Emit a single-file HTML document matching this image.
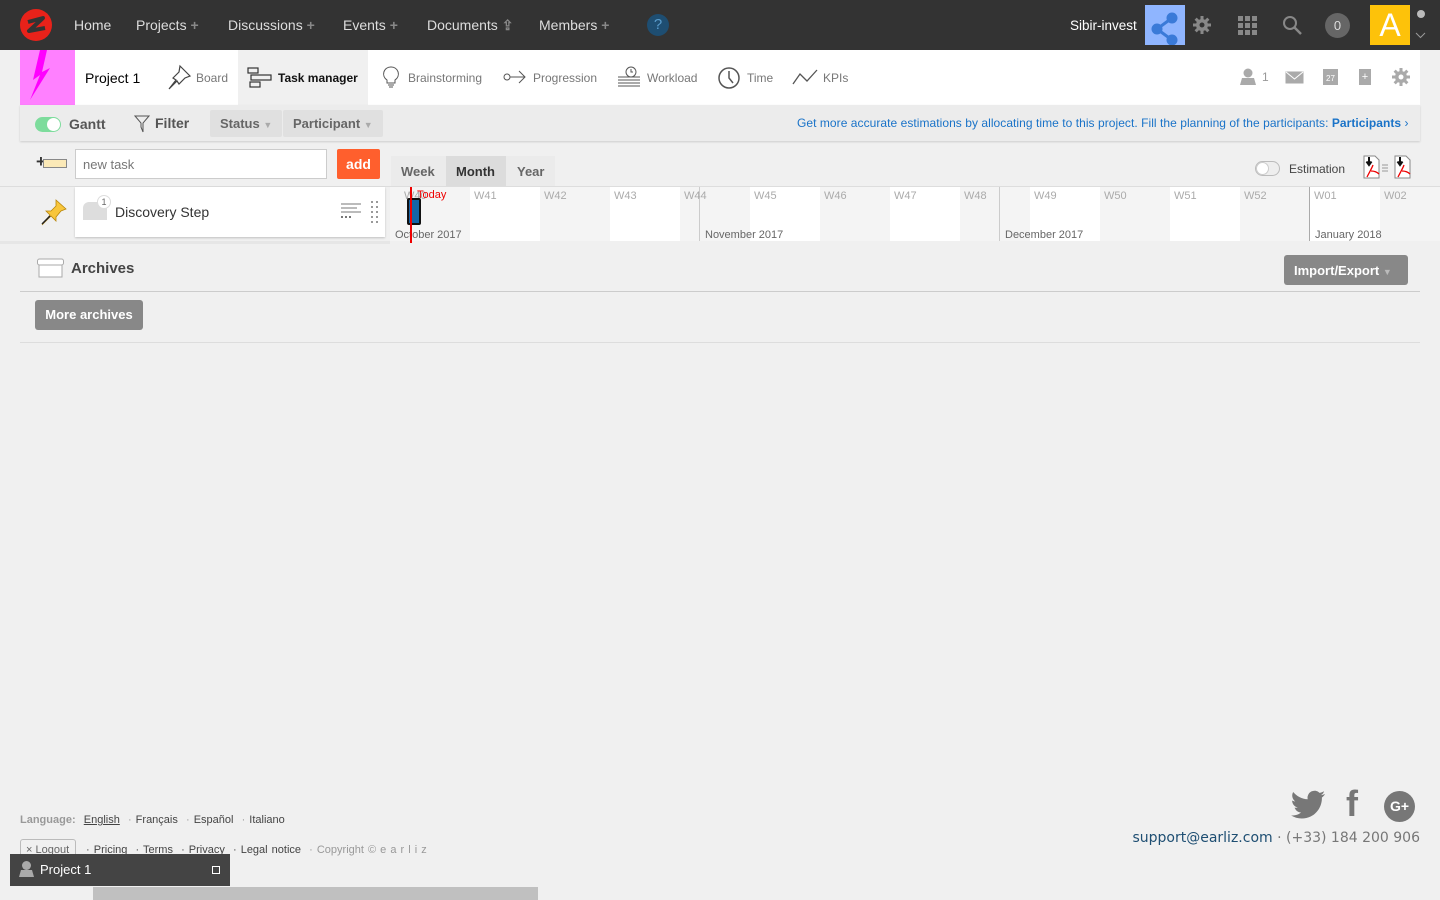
<!DOCTYPE html>
<html><head><meta charset="utf-8"><style>
*{box-sizing:border-box;margin:0;padding:0}
body{width:1440px;height:900px;background:#f0f0f0;font-family:"Liberation Sans",sans-serif;position:relative;overflow:hidden;color:#333}
.a{position:absolute}
.top{left:0;top:0;width:1440px;height:50px;background:#333}
.nav{color:#ddd;font-size:14px;top:17px;line-height:17px}
.plus{color:#888;font-size:14px;font-weight:bold}
.pn{left:20px;top:50px;width:1400px;height:55px;background:#fff}
.tab{top:71px;font-size:12px;color:#777}
.fb{left:20px;top:105px;width:1400px;height:36px;background:#ececec;box-shadow:0 1px 2px rgba(0,0,0,.15)}
.dd{top:110px;height:27px;background:#e0e0e0;color:#666;font-weight:bold;font-size:13px;padding:6px 10px;border-radius:2px}
.wk{font-size:11px;color:#aaa;top:190px}
.mo{font-size:11px;color:#666;top:229px}
</style></head><body>
<div class="a top"></div>
<svg class="a" style="left:19px;top:8px" width="34" height="34" viewBox="0 0 34 34"><circle cx="17" cy="17" r="16" fill="#e8221a"/><path d="M9 14 L24 10 L10 23 L26 20" stroke="#333" stroke-width="4" fill="none" stroke-linejoin="round"/></svg>
<div class="a nav" style="left:74px">Home</div>
<div class="a nav" style="left:136px">Projects <span class="plus">+</span></div>
<div class="a nav" style="left:228px">Discussions <span class="plus">+</span></div>
<div class="a nav" style="left:343px">Events <span class="plus">+</span></div>
<div class="a nav" style="left:427px">Documents <span class="plus">⇪</span></div>
<div class="a nav" style="left:539px">Members <span class="plus">+</span></div>
<div class="a" style="left:647px;top:14px;width:22px;height:22px;border-radius:50%;background:#1e4e72;color:#5a9ccc;font-size:15px;text-align:center;line-height:22px">?</div>
<div class="a" style="left:1070px;top:18px;color:#fff;font-size:13.5px">Sibir-invest</div>
<div class="a" style="left:1145px;top:5px;width:40px;height:40px;background:#8fb5ff"><svg width="40" height="40"><g fill="#3a7ad8" stroke="#3a7ad8" stroke-width="3"><circle cx="27" cy="13" r="4"/><circle cx="12" cy="24" r="4"/><circle cx="27" cy="35" r="4"/><path d="M27 13L12 24L27 35" fill="none"/></g></svg></div>
<svg class="a" style="left:1193px;top:16px" width="18" height="18" viewBox="0 0 18 18"><g fill="#888"><circle cx="9" cy="9" r="6"/><rect x="7.5" y="0" width="3" height="18"/><rect x="0" y="7.5" width="18" height="3"/><rect x="7.5" y="0" width="3" height="18" transform="rotate(45 9 9)"/><rect x="7.5" y="0" width="3" height="18" transform="rotate(-45 9 9)"/></g><circle cx="9" cy="9" r="2.5" fill="#333"/></svg>
<svg class="a" style="left:1238px;top:16px" width="19" height="19"><g fill="#888"><rect x="0" y="0" width="5" height="5"/><rect x="7" y="0" width="5" height="5"/><rect x="14" y="0" width="5" height="5"/><rect x="0" y="7" width="5" height="5"/><rect x="7" y="7" width="5" height="5"/><rect x="14" y="7" width="5" height="5"/><rect x="0" y="14" width="5" height="5"/><rect x="7" y="14" width="5" height="5"/><rect x="14" y="14" width="5" height="5"/></g></svg>
<svg class="a" style="left:1282px;top:15px" width="22" height="22"><circle cx="8" cy="8" r="6" stroke="#888" stroke-width="2" fill="none"/><path d="M12 12L19 19" stroke="#888" stroke-width="2.5"/></svg>
<div class="a" style="left:1325px;top:13px;width:25px;height:25px;border-radius:50%;background:#666;color:#ddd;font-size:13px;text-align:center;line-height:25px">0</div>
<div class="a" style="left:1370px;top:5px;width:40px;height:40px;background:#fdc20a;color:#fff;font-size:32px;text-align:center;line-height:40px">A</div>
<div class="a" style="left:1417px;top:10px;width:8px;height:8px;border-radius:50%;background:#bbb"></div>
<svg class="a" style="left:1415px;top:32px" width="11" height="7"><path d="M1 1l4.5 4.5L10 1" stroke="#999" fill="none"/></svg>

<div class="a pn"></div>
<div class="a" style="left:20px;top:50px;width:55px;height:55px;background:#ff80ff"><svg width="55" height="55"><path d="M20 0 L13 30 L20 25 L10 50 L30 18 L22 22 L27 0Z" fill="#ff00ff"/></svg></div>
<div class="a" style="left:85px;top:70px;font-size:14px;color:#000">Project 1</div>
<svg class="a" style="left:166px;top:64px" width="26" height="26"><path d="M14 2l10 10-5 2-6 6-2-3-8 8 7-9-3-2 6-6z" fill="none" stroke="#444" stroke-width="1.2"/></svg>
<div class="a tab" style="left:196px">Board</div>
<div class="a" style="left:238px;top:50px;width:130px;height:55px;background:#f0f0f0"></div>
<svg class="a" style="left:247px;top:67px" width="26" height="22"><g fill="none" stroke="#333" stroke-width="1.2"><rect x="1" y="1" width="10" height="5"/><rect x="4" y="8" width="20" height="5"/><rect x="3" y="15" width="10" height="5"/></g></svg>
<div class="a tab" style="left:278px;color:#111;font-weight:bold">Task manager</div>
<svg class="a" style="left:381px;top:65px" width="20" height="25"><path d="M10 2a7 7 0 0 0-4 13v3h8v-3a7 7 0 0 0-4-13z" fill="none" stroke="#555"/><path d="M7 20h6M8 22h4" stroke="#555"/></svg>
<div class="a tab" style="left:408px">Brainstorming</div>
<svg class="a" style="left:503px;top:69px" width="24" height="16"><circle cx="4" cy="8" r="3" fill="none" stroke="#555"/><path d="M7 8h15M16 2l6 6-6 6" fill="none" stroke="#555"/></svg>
<div class="a tab" style="left:533px">Progression</div>
<svg class="a" style="left:617px;top:65px" width="24" height="24"><g stroke="#555" fill="none"><circle cx="14" cy="7" r="5"/><path d="M14 4v3h2M1 12h22M1 15h22M1 18h22M1 21h22"/></g></svg>
<div class="a tab" style="left:647px">Workload</div>
<svg class="a" style="left:717px;top:66px" width="24" height="24"><circle cx="12" cy="12" r="10" fill="none" stroke="#555" stroke-width="1.5"/><path d="M12 5v7l4 5" stroke="#555" fill="none" stroke-width="1.5"/></svg>
<div class="a tab" style="left:747px">Time</div>
<svg class="a" style="left:791px;top:68px" width="28" height="18"><path d="M2 16L9 6L16 13L26 2" fill="none" stroke="#555" stroke-width="1.3"/></svg>
<div class="a tab" style="left:823px">KPIs</div>
<svg class="a" style="left:1240px;top:68px" width="16" height="17"><circle cx="8" cy="5" r="4.5" fill="#aaa"/><path d="M0 17l2-7h12l2 7z" fill="#aaa"/></svg>
<div class="a" style="left:1262px;top:70px;color:#999;font-size:12px">1</div>
<svg class="a" style="left:1285px;top:71px" width="19" height="13"><rect x="0.5" y="0.5" width="18" height="12" fill="#aaa"/><path d="M1 1l8.5 7L18 1" stroke="#fff" fill="none"/></svg>
<div class="a" style="left:1323px;top:69px;width:15px;height:16px;background:#aaa;color:#fff;font-size:8px;text-align:center;line-height:20px">27</div>
<div class="a" style="left:1359px;top:69px;width:12px;height:16px;background:#aaa;color:#fff;font-size:11px;text-align:center;line-height:17px">+</div>
<svg class="a" style="left:1392px;top:68px" width="18" height="18" viewBox="0 0 18 18"><g fill="#aaa"><circle cx="9" cy="9" r="6"/><rect x="7.5" y="0" width="3" height="18"/><rect x="0" y="7.5" width="18" height="3"/><rect x="7.5" y="0" width="3" height="18" transform="rotate(45 9 9)"/><rect x="7.5" y="0" width="3" height="18" transform="rotate(-45 9 9)"/></g><circle cx="9" cy="9" r="2.5" fill="#fff"/></svg>

<div class="a fb"></div>
<div class="a" style="left:35px;top:117px;width:26px;height:15px;border-radius:8px;background:#7ddc9c"><div style="position:absolute;right:1px;top:1px;width:13px;height:13px;border-radius:50%;background:#fff"></div></div>
<div class="a" style="left:69px;top:116px;font-size:14px;font-weight:bold;color:#555">Gantt</div>
<svg class="a" style="left:134px;top:115px" width="16" height="18"><path d="M1 1h14L9 8v9L7 12V8Z" fill="none" stroke="#555"/></svg>
<div class="a" style="left:155px;top:115px;font-size:14px;font-weight:bold;color:#555">Filter</div>
<div class="a dd" style="left:210px">Status <span style="color:#aaa;font-size:9px">▼</span></div>
<div class="a dd" style="left:283px">Participant <span style="color:#aaa;font-size:9px">▼</span></div>
<div class="a" style="left:797px;top:116px;font-size:12px;color:#1a73c8;letter-spacing:.05px">Get more accurate estimations by allocating time to this project. Fill the planning of the participants: <b>Participants</b> ›</div>

<div class="a" style="left:36px;top:152px;font-size:17px;font-weight:bold;color:#333">+</div>
<div class="a" style="left:43px;top:159px;width:24px;height:9px;background:#fbe9b7;border:1px solid #888"></div>
<div class="a" style="left:75px;top:149px;width:252px;height:30px;background:#fff;border:1px solid #ccc;font-size:13px;color:#777;padding:7px 7px">new task</div>
<div class="a" style="left:337px;top:149px;width:43px;height:30px;background:#ff5f2d;color:#fff;font-weight:bold;font-size:14px;text-align:center;line-height:30px;border-radius:2px">add</div>
<div class="a" style="left:391px;top:156px;width:164px;height:30px;background:#ebebeb"></div>
<div class="a" style="left:446px;top:156px;width:60px;height:30px;background:#dcdcdc"></div>
<div class="a" style="left:401px;top:164px;font-size:13px;font-weight:bold;color:#666">Week</div>
<div class="a" style="left:456px;top:164px;font-size:13px;font-weight:bold;color:#333">Month</div>
<div class="a" style="left:517px;top:164px;font-size:13px;font-weight:bold;color:#666">Year</div>
<div class="a" style="left:1255px;top:161px;width:25px;height:15px;border-radius:8px;border:1px solid #bbb;background:#eee"><div style="position:absolute;left:0;top:0;width:13px;height:13px;border-radius:50%;background:#fff;border:1px solid #ccc"></div></div>
<div class="a" style="left:1289px;top:162px;font-size:12px;color:#444">Estimation</div>
<svg class="a" style="left:1363px;top:155px" width="28" height="24"><path d="M1 1h11l4 4v18H1z" fill="#fff" stroke="#888"/><path d="M6 2v7M3.5 6.5L6 10l2.5-3.5" stroke="#111" stroke-width="2" fill="none"/><path d="M4 22c3-6 5-9 6-12M8 16c3 0 6 1 8 3" stroke="#e00" stroke-width="1.3" fill="none"/><path d="M19 10h6M19 13h6M19 16h6" stroke="#999"/></svg>
<svg class="a" style="left:1394px;top:155px" width="18" height="24"><path d="M1 1h11l4 4v18H1z" fill="#fff" stroke="#888"/><path d="M6 2v7M3.5 6.5L6 10l2.5-3.5" stroke="#111" stroke-width="2" fill="none"/><path d="M4 22c3-6 5-9 6-12M8 16c3 0 6 1 8 3" stroke="#e00" stroke-width="1.3" fill="none"/></svg>

<div class="a" style="left:0;top:186px;width:1440px;height:1px;background:#ddd"></div>
<div class="a" style="left:390px;top:187px;width:1050px;height:54px;background:#f4f4f4"></div>
<div class="a" style="left:470px;top:187px;width:70px;height:54px;background:#fff"></div>
<div class="a" style="left:610px;top:187px;width:70px;height:54px;background:#fff"></div>
<div class="a" style="left:750px;top:187px;width:70px;height:54px;background:#fff"></div>
<div class="a" style="left:890px;top:187px;width:70px;height:54px;background:#fff"></div>
<div class="a" style="left:1030px;top:187px;width:70px;height:54px;background:#fff"></div>
<div class="a" style="left:1170px;top:187px;width:70px;height:54px;background:#fff"></div>
<div class="a" style="left:1310px;top:187px;width:70px;height:54px;background:#fff"></div>
<div class="a" style="left:699px;top:187px;width:1px;height:54px;background:#ccc"></div>
<div class="a" style="left:999px;top:187px;width:1px;height:54px;background:#ccc"></div>
<div class="a" style="left:1309px;top:187px;width:1px;height:54px;background:#aaa"></div>
<div class="a wk" style="left:404px">W40</div><div class="a wk" style="left:474px">W41</div><div class="a wk" style="left:544px">W42</div><div class="a wk" style="left:614px">W43</div><div class="a wk" style="left:684px">W44</div><div class="a wk" style="left:754px">W45</div><div class="a wk" style="left:824px">W46</div><div class="a wk" style="left:894px">W47</div><div class="a wk" style="left:964px">W48</div><div class="a wk" style="left:1034px">W49</div><div class="a wk" style="left:1104px">W50</div><div class="a wk" style="left:1174px">W51</div><div class="a wk" style="left:1244px">W52</div><div class="a wk" style="left:1314px">W01</div><div class="a wk" style="left:1384px">W02</div>
<div class="a mo" style="left:395px">October 2017</div><div class="a mo" style="left:705px">November 2017</div><div class="a mo" style="left:1005px">December 2017</div><div class="a mo" style="left:1315px">January 2018</div>
<div class="a" style="left:407px;top:198px;width:14px;height:27px;background:#1565a8;border:2px solid #111;border-radius:2px"></div>
<div class="a" style="left:410px;top:187px;width:2px;height:56px;background:#e00"></div>
<div class="a" style="left:417px;top:189px;font-size:11px;color:#e00">Today</div>
<div class="a" style="left:0;top:241px;width:390px;height:3px;background:#e6e6e6"></div>

<svg class="a" style="left:40px;top:198px" width="28" height="28"><path d="M16 2l10 9-5 2-5 6 0 4-5-5-9 9 8-10-4-4 5 0 5-5z" fill="#f8c63c" stroke="#b8860b" stroke-width=".8"/><path d="M10 18L2 26" stroke="#222" stroke-width="1.5"/></svg>
<div class="a" style="left:75px;top:187px;width:310px;height:50px;background:#fff;box-shadow:0 1px 2px rgba(0,0,0,.2)"></div>
<div class="a" style="left:83px;top:202px;width:24px;height:18px;background:#ddd;border-radius:6px 0 0 0"></div>
<div class="a" style="left:97px;top:195px;width:14px;height:14px;border-radius:50%;background:#fff;border:1px solid #ddd;font-size:9px;color:#666;text-align:center;line-height:12px">1</div>
<div class="a" style="left:115px;top:204px;font-size:14px;color:#333">Discovery Step</div>
<svg class="a" style="left:340px;top:203px" width="22" height="16"><g stroke="#777"><path d="M1 1h20M1 5h16M1 9h20"/><path d="M1 14h2M5 14h2M9 14h2" stroke-width="2"/></g></svg>
<svg class="a" style="left:371px;top:201px" width="8" height="22"><g fill="#999"><rect x="0" y="0" width="2" height="2"/><rect x="5" y="0" width="2" height="2"/><rect x="0" y="5" width="2" height="2"/><rect x="5" y="5" width="2" height="2"/><rect x="0" y="10" width="2" height="2"/><rect x="5" y="10" width="2" height="2"/><rect x="0" y="15" width="2" height="2"/><rect x="5" y="15" width="2" height="2"/><rect x="0" y="20" width="2" height="2"/><rect x="5" y="20" width="2" height="2"/></g></svg>

<svg class="a" style="left:37px;top:258px" width="27" height="20"><g fill="#fff" stroke="#aaa"><rect x="2" y="6" width="23" height="13"/><rect x="0.5" y="1" width="26" height="6" rx="2"/></g></svg>
<div class="a" style="left:71px;top:260px;font-size:15px;font-weight:bold;color:#444">Archives</div>
<div class="a" style="left:1284px;top:255px;width:124px;height:30px;background:#888;border-radius:3px;color:#fff;font-size:13px;font-weight:bold;padding:8px 10px">Import/Export <span style="color:#bbb;font-size:9px">▼</span></div>
<div class="a" style="left:20px;top:291px;width:1400px;height:1px;background:#ccc"></div>
<div class="a" style="left:35px;top:300px;width:108px;height:30px;background:#888;border-radius:3px;color:#fff;font-size:13px;font-weight:bold;text-align:center;line-height:30px">More archives</div>
<div class="a" style="left:20px;top:342px;width:1400px;height:1px;background:#ddd"></div>

<div class="a" style="left:20px;top:814px;font-size:11px;color:#444;word-spacing:1px"><span style="color:#999;font-weight:bold">Language:</span> &nbsp;<u>English</u> &nbsp;<span style="color:#999">·</span> Français &nbsp;<span style="color:#999">·</span> Español &nbsp;<span style="color:#999">·</span> Italiano</div>
<div class="a" style="left:20px;top:839px;width:56px;height:22px;border:1px solid #bbb;border-radius:3px;font-size:11px;color:#666;padding:4px 5px">× Logout</div>
<div class="a" style="left:82px;top:844px;font-size:11px;color:#444;word-spacing:1px">&nbsp;· Pricing &nbsp;· Terms &nbsp;· Privacy &nbsp;· Legal notice &nbsp;<span style="color:#999">· Copyright © e a r l i z</span></div>
<div class="a" style="left:10px;top:854px;width:220px;height:32px;background:#444"></div>
<svg class="a" style="left:19px;top:861px" width="15" height="16"><circle cx="7.5" cy="4.5" r="4.5" fill="#aaa"/><path d="M0 16l2-7h11l2 7z" fill="#aaa"/></svg>
<div class="a" style="left:40px;top:862px;font-size:13px;color:#fff">Project 1</div>
<div class="a" style="left:212px;top:866px;width:8px;height:8px;border:1.5px solid #fff"></div>
<div class="a" style="left:93px;top:887px;width:445px;height:13px;background:#c0c0c0"></div>

<svg class="a" style="left:1290px;top:790px" width="36" height="30"><path d="M35 4c-1.3.6-2.7 1-4 1.1 1.5-.9 2.6-2.3 3.1-3.9-1.4.8-2.9 1.4-4.5 1.7A7 7 0 0 0 17.700 9.300C11.900 9 6.700 6.200 3.200 2 1.300 5.200 2.300 9.300 5.300 11.400c-1.100 0-2.200-.4-3.200-.9 0 3.400 2.400 6.300 5.700 7-1 .3-2.100.3-3.200.1.900 2.800 3.500 4.800 6.500 4.900A14 14 0 0 1 1 25.400 20 20 0 0 0 11.800 28.500c13 0 20.100-10.800 20.100-20.100v-.9C33.300 6.500 34.300 5.300 35 4z" fill="#777"/></svg>
<div class="a" style="left:1346px;top:783px;font-size:36px;font-weight:bold;color:#777">f</div>
<div class="a" style="left:1384px;top:791px;width:31px;height:31px;border-radius:50%;background:#777;color:#fff;font-weight:bold;font-size:14px;text-align:center;line-height:31px">G+</div>
<div class="a" style="right:20px;top:830px;font-size:14px;color:#1e4e72;font-family:'DejaVu Sans',sans-serif;white-space:nowrap">support@earliz.com <span style="color:#777">· (+33) 184 200 906</span></div>
</body></html>
